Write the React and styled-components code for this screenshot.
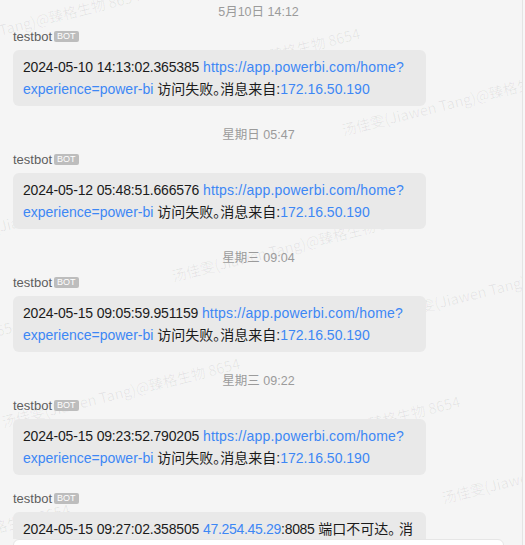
import React from 'react'
import styled, { createGlobalStyle } from 'styled-components'

const GlobalStyle = createGlobalStyle`
  html, body {
    margin: 0;
    padding: 0;
    background: #f7f7f7;
  }
  body {
    font-family: "Liberation Sans", "Noto Sans CJK SC", sans-serif;
  }
`;

const WATERMARK = '汤佳雯(Jiawen Tang)@臻格生物 8654';

// watermark tiles, laid out on a skewed lattice
const marks = [];
for (let i = -3; i <= 5; i++) {
  for (let j = -3; j <= 3; j++) {
    const x = 2 + i * 170 + j * 220;
    const y = 422 - i * 146 + j * 38;
    if (x > -280 && x < 525 && y > -20 && y < 600) marks.push({ x, y });
  }
}

const url = (stamp) => [
  { text: stamp + ' ', spacing: -0.17 },
  { text: 'https://app.powerbi.com/home?', link: true, spacing: 0.2 },
  { wbr: true },
  { text: 'experience=power-bi', link: true },
  { text: ' 访问失败。消息来自:' },
  { text: '172.16.50.190', link: true },
];

const messages = [
  { time: '5月10日 14:12', parts: url('2024-05-10 14:13:02.365385') },
  { time: '星期日 05:47', parts: url('2024-05-12 05:48:51.666576') },
  { time: '星期三 09:04', parts: url('2024-05-15 09:05:59.951159') },
  { time: '星期三 09:22', parts: url('2024-05-15 09:23:52.790205') },
  {
    parts: [
      { text: '2024-05-15 09:27:02.358505 ', spacing: -0.17 },
      { text: '47.254.45.29', link: true, spacing: -0.3 },
      { text: ':8085 ', spacing: -0.3 },
      { text: '端口不可达。 消息来自:' },
      { text: '172.16.50.190', link: true },
    ],
  },
];

export default function App() {
  return (
    <>
      <GlobalStyle />
      <Panel>
        <MessageList>
          <Watermarks>
            {marks.map((m, k) => (
              <Mark key={k} style={{ left: m.x, top: m.y }}>{WATERMARK}</Mark>
            ))}
          </Watermarks>
          <Scroller>
            {messages.map((msg, idx) => (
              <Group key={idx}>
                {msg.time && <TimeDivider>{msg.time}</TimeDivider>}
                <Sender>
                  testbot
                  <Badge>BOT</Badge>
                </Sender>
                <Bubble>
                  {msg.parts.map((p, n) =>
                    p.wbr ? (
                      <wbr key={n} />
                    ) : (
                      <Segment key={n} $link={p.link} $spacing={p.spacing}>
                        {p.text}
                      </Segment>
                    )
                  )}
                </Bubble>
              </Group>
            ))}
          </Scroller>
        </MessageList>
        <Composer />
      </Panel>
    </>
  )
}

const Panel = styled.div`
  width: 522px;
  height: 545px;
  border-right: 1px solid #e4e4e4;
  background: #f5f5f5;
  display: flex;
  flex-direction: column;
  overflow: hidden;
`;

const MessageList = styled.div`
  position: relative;
  flex: 0 0 539px;
  overflow: hidden;
`;

const Watermarks = styled.div`
  position: absolute;
  inset: 0;
  pointer-events: none;
  z-index: 0;
`;

const Mark = styled.span`
  position: absolute;
  margin-top: -10px;
  font-family: "Noto Sans CJK SC", sans-serif;
  font-size: 14.5px;
  line-height: 20px;
  color: rgba(0, 0, 0, 0.065);
  white-space: nowrap;
  transform-origin: left center;
  transform: rotate(-14deg);
`;

const Scroller = styled.div`
  position: relative;
  z-index: 1;
  margin-top: -17px;
  padding: 0 18px 0 13px;
`;

const Group = styled.div`
  margin-top: 13px;
  display: flex;
  flex-direction: column;
  align-items: flex-start;
`;

const TimeDivider = styled.div`
  align-self: stretch;
  text-align: center;
  padding-top: 6px;
  margin-bottom: 4px;
  font-size: 12.5px;
  line-height: 20px;
  color: #9b9b9b;
`;

const Sender = styled.div`
  display: flex;
  align-items: center;
  height: 20px;
  margin-bottom: 4px;
  font-size: 13px;
  color: #5e5e5e;
`;

const Badge = styled.span`
  margin-left: 2px;
  margin-top: 1px;
  height: 11px;
  padding: 0 3px;
  border-radius: 2px;
  background: #bdbdbd;
  color: #fff;
  font-size: 9px;
  line-height: 11px;
`;

const Bubble = styled.div`
  max-width: 413px;
  box-sizing: border-box;
  padding: 6px 10px;
  border-radius: 6px;
  background: #e9e9e9;
  color: #1b1b1b;
  font-size: 14px;
  line-height: 22px;
  font-feature-settings: "halt";
`;

const Segment = styled.span`
  color: ${(p) => (p.$link ? '#3d87f5' : 'inherit')};
  letter-spacing: ${(p) => (p.$spacing ? `${p.$spacing}px` : 'normal')};
`;

const Composer = styled.div`
  flex: 0 0 140px;
  margin: 0 18px 0 13px;
  background: #fff;
  border: 1px solid #e6e6e6;
  border-radius: 6px;
`;
